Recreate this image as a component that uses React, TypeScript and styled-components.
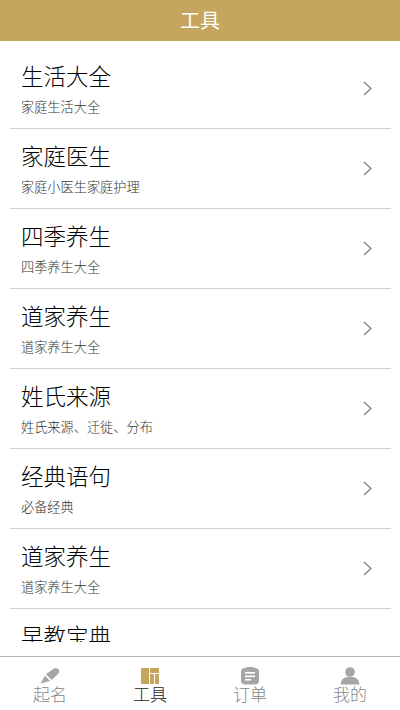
import React from "react";
import styled, { createGlobalStyle } from "styled-components";

const GlobalStyle = createGlobalStyle`
  html, body {
    margin: 0;
    padding: 0;
    background: #fff;
    font-family: "Liberation Sans", "Noto Sans CJK SC", sans-serif;
  }
`;

const Page = styled.div`
  width: 400px;
  height: 710px;
  display: flex;
  flex-direction: column;
  overflow: hidden;
  background: #fff;
`;

const Header = styled.div`
  height: 41px;
  flex: none;
  display: flex;
  align-items: center;
  justify-content: center;
  background: #c6a55f;
  color: #fff;
  font-size: 20px;
  padding-bottom: 2px;
  box-sizing: border-box;
`;

// the last row is cut off by the scroll area, a little above the tab bar
const List = styled.div`
  height: 601px;
  flex: none;
  overflow: hidden;
  padding: 8px 9px 0 10px;
  box-sizing: border-box;
`;

const Row = styled.div`
  height: 79px;
  display: flex;
  align-items: center;
  justify-content: space-between;
  border-bottom: 1px solid #cfcfcf;
  padding: 0 19px 0 11px;
`;

const RowText = styled.div`
  min-height: 53px;
  padding-top: 1px;
  display: flex;
  flex-direction: column;
  gap: 6px;
`;

const Title = styled.div`
  color: #000;
  font-size: 22.5px;
  font-weight: 300;
  line-height: 30px;
`;

const Sub = styled.div`
  color: #333;
  font-size: 13.2px;
  font-weight: 300;
  line-height: 17px;
`;

const TabBar = styled.div`
  height: 54px;
  flex: none;
  margin-top: 14px;
  display: grid;
  grid-template-columns: repeat(4, 1fr);
  border-top: 1px solid #b4b4b4;
  box-sizing: border-box;
`;

const Tab = styled.div<{ $active?: boolean }>`
  display: flex;
  flex-direction: column;
  align-items: center;
  padding-top: 10px;
  gap: 1px;
  color: ${(p) => (p.$active ? "#222" : "#888")};
  font-size: 17px;
  font-weight: 300;
  line-height: 20px;
`;

const Chevron = () => (
  <svg width="9" height="15" viewBox="0 0 9 15" fill="none">
    <path d="M1 1 L8 7.5 L1 14" stroke="#777" strokeWidth="1.1" />
  </svg>
);

const PenIcon = () => (
  <svg width="20" height="18" viewBox="0 0 20 18">
    <path d="M6 7 L14 1.5 Q17 .2 19 3 Q20 5 18 7 L11.5 13 Z" fill="#a6a6a6" />
    <path d="M5 8.5 L10 14 L0.5 16.5 Z" fill="#a6a6a6" />
  </svg>
);

const ToolIcon = () => (
  <svg width="20" height="18" viewBox="0 0 20 18">
    <rect x="1" y="1" width="8" height="16" fill="#c6a55f" />
    <rect x="10" y="1" width="9" height="5" fill="#c6a55f" />
    <rect x="10" y="7" width="4" height="10" fill="#c6a55f" />
    <rect x="15" y="7" width="4" height="10" fill="#c6a55f" />
  </svg>
);

const OrderIcon = () => (
  <svg width="20" height="18" viewBox="0 0 20 18">
    <rect x="1" y="1" width="18" height="16.5" rx="4" fill="#a6a6a6" />
    <rect x="6" y="0" width="8" height="2" rx="1" fill="#a6a6a6" />
    <rect x="5" y="5" width="10" height="1.6" fill="#fff" />
    <rect x="5" y="8.5" width="10" height="1.6" fill="#fff" />
    <rect x="5" y="12" width="6" height="1.6" fill="#fff" />
  </svg>
);

const UserIcon = () => (
  <svg width="20" height="18" viewBox="0 0 20 18">
    <circle cx="10" cy="5" r="4.8" fill="#a6a6a6" />
    <path d="M0.5 17.5 Q1 10.5 7 10 H13 Q19 10.5 19.5 17.5 Z" fill="#a6a6a6" />
  </svg>
);

const rows = [
  ["生活大全", "家庭生活大全"],
  ["家庭医生", "家庭小医生家庭护理"],
  ["四季养生", "四季养生大全"],
  ["道家养生", "道家养生大全"],
  ["姓氏来源", "姓氏来源、迁徙、分布"],
  ["经典语句", "必备经典"],
  ["道家养生", "道家养生大全"],
];

export default function App() {
  return (
    <Page>
      <GlobalStyle />
      <Header>工具</Header>
      <List>
        {rows.map(([title, sub], i) => (
          <Row key={i}>
            <RowText>
              <Title>{title}</Title>
              <Sub>{sub}</Sub>
            </RowText>
            <Chevron />
          </Row>
        ))}
        <Row>
          <RowText>
            <Title>早教宝典</Title>
          </RowText>
        </Row>
      </List>
      <TabBar>
        <Tab>
          <PenIcon />
          起名
        </Tab>
        <Tab $active>
          <ToolIcon />
          工具
        </Tab>
        <Tab>
          <OrderIcon />
          订单
        </Tab>
        <Tab>
          <UserIcon />
          我的
        </Tab>
      </TabBar>
    </Page>
  );
}
